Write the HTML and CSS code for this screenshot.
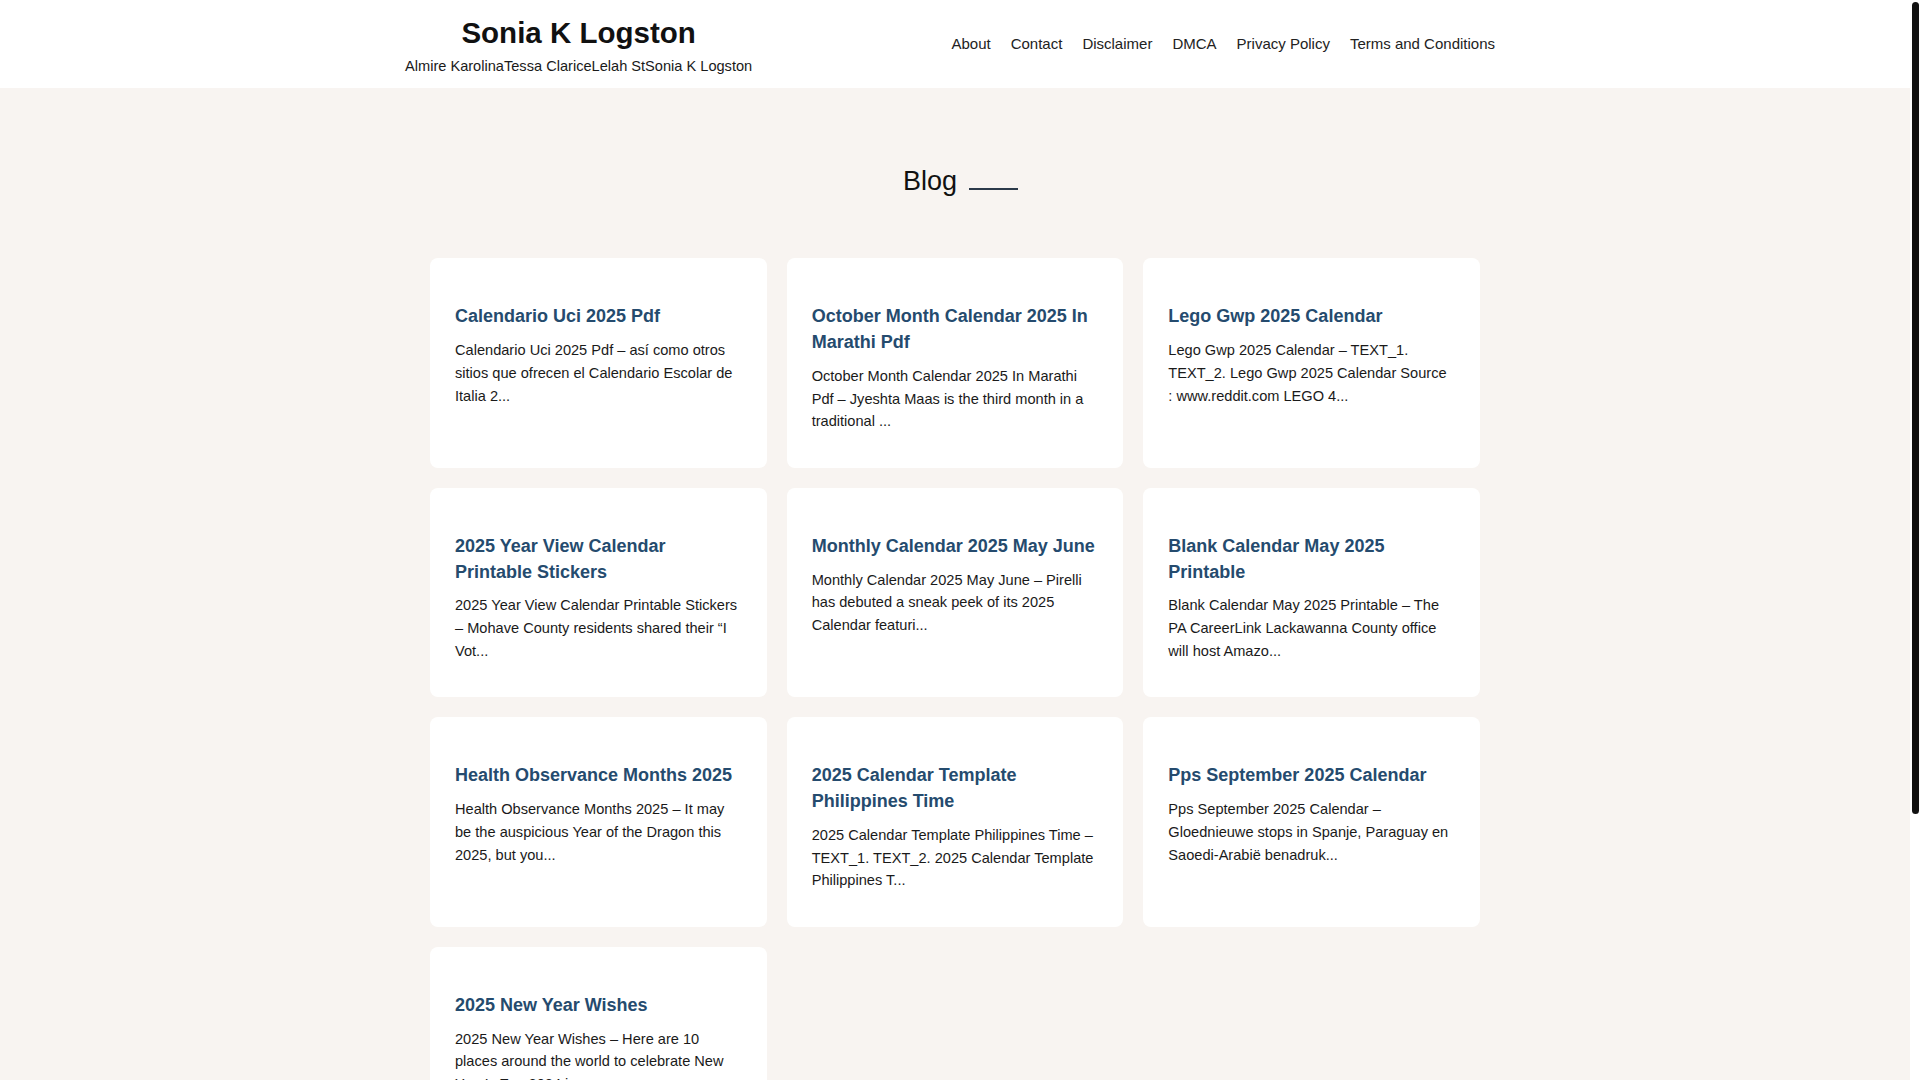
FILE: index.html
```html
<!DOCTYPE html>
<html lang="en">
<head>
<meta charset="utf-8">
<title>Blog - Sonia K Logston</title>
<link rel="stylesheet" href="styles.css">
</head>
<body>
<header class="site-header">
  <div class="header-inner">
    <div class="branding">
      <div class="site-title">Sonia K Logston</div>
      <div class="site-desc">Almire KarolinaTessa ClariceLelah StSonia K Logston</div>
    </div>
    <nav class="main-nav">
      <a href="#">About</a>
      <a href="#">Contact</a>
      <a href="#">Disclaimer</a>
      <a href="#">DMCA</a>
      <a href="#">Privacy Policy</a>
      <a href="#">Terms and Conditions</a>
    </nav>
  </div>
</header>

<main class="content">
  <div class="page-heading"><h1 class="page-title">Blog</h1></div>

  <div class="post-grid">
    <article class="card">
      <h2 class="card-title">Calendario Uci 2025 Pdf</h2>
      <p class="card-text">Calendario Uci 2025 Pdf – así como otros sitios que ofrecen el Calendario Escolar de Italia 2...</p>
    </article>
    <article class="card">
      <h2 class="card-title">October Month Calendar 2025 In Marathi Pdf</h2>
      <p class="card-text">October Month Calendar 2025 In Marathi Pdf – Jyeshta Maas is the third month in a traditional ...</p>
    </article>
    <article class="card">
      <h2 class="card-title">Lego Gwp 2025 Calendar</h2>
      <p class="card-text">Lego Gwp 2025 Calendar – TEXT_1. TEXT_2. Lego Gwp 2025 Calendar Source : www.reddit.com LEGO 4...</p>
    </article>
    <article class="card">
      <h2 class="card-title">2025 Year View Calendar Printable Stickers</h2>
      <p class="card-text">2025 Year View Calendar Printable Stickers – Mohave County residents shared their “I Vot...</p>
    </article>
    <article class="card">
      <h2 class="card-title">Monthly Calendar 2025 May June</h2>
      <p class="card-text">Monthly Calendar 2025 May June – Pirelli has debuted a sneak peek of its 2025 Calendar featuri...</p>
    </article>
    <article class="card">
      <h2 class="card-title">Blank Calendar May 2025 Printable</h2>
      <p class="card-text">Blank Calendar May 2025 Printable – The PA CareerLink Lackawanna County office will host Amazo...</p>
    </article>
    <article class="card">
      <h2 class="card-title">Health Observance Months 2025</h2>
      <p class="card-text">Health Observance Months 2025 – It may be the auspicious Year of the Dragon this 2025, but you...</p>
    </article>
    <article class="card">
      <h2 class="card-title">2025 Calendar Template Philippines Time</h2>
      <p class="card-text">2025 Calendar Template Philippines Time – TEXT_1. TEXT_2. 2025 Calendar Template Philippines T...</p>
    </article>
    <article class="card">
      <h2 class="card-title">Pps September 2025 Calendar</h2>
      <p class="card-text">Pps September 2025 Calendar – Gloednieuwe stops in Spanje, Paraguay en Saoedi-Arabië benadruk...</p>
    </article>
    <article class="card">
      <h2 class="card-title">2025 New Year Wishes</h2>
      <p class="card-text">2025 New Year Wishes – Here are 10 places around the world to celebrate New Year’s Eve 2024 in...</p>
    </article>
  </div>

  <nav class="pagination">
    <span class="page current">1</span>
    <a class="page" href="#">2</a>
    <a class="page" href="#">3</a>
    <a class="page" href="#">Next</a>
  </nav>
</main>

<footer class="site-footer">
  <p>Copyright © 2025 Sonia K Logston</p>
</footer>

<div class="scrollbar" aria-hidden="true"><div class="scrollbar-thumb"></div></div>
</body>
</html>
```

FILE: styles.css
```css
html {
  background: #ffffff;
}

body {
  margin: 0;
  padding-right: 10px;
  background: #f8f4f1;
  font-family: "Liberation Sans", Arial, sans-serif;
  color: #1c1c1c;
}

a {
  color: inherit;
  text-decoration: none;
}

.scrollbar {
  position: fixed;
  top: 0;
  right: 0;
  width: 10px;
  height: 100vh;
  background: #ffffff;
}

.scrollbar-thumb {
  margin: 2px 1px 0 2px;
  height: 812px;
  background: #111111;
  border-radius: 4px;
}

.site-header {
  background: #ffffff;
  height: 88px;
}

.header-inner {
  max-width: 1100px;
  margin: 0 auto;
  height: 100%;
  display: flex;
  justify-content: space-between;
  align-items: flex-start;
}

.branding {
  padding-top: 15px;
  text-align: center;
}

.site-title {
  font-size: 29.5px;
  line-height: 35.4px;
  font-weight: 700;
  color: #111111;
}

.site-desc {
  margin-top: 5.5px;
  font-size: 14.6px;
  line-height: 21.75px;
  color: #1a1a1a;
}

.main-nav {
  align-self: center;
  display: flex;
  font-size: 15px;
  line-height: 20px;
  color: #222222;
}

.main-nav a {
  padding: 0 10px;
}

.content {
  padding: 77.4px 0 60px;
}

.page-heading {
  display: flex;
  justify-content: center;
}

.page-title {
  margin: 0 0 0 11px;
  display: inline-flex;
  align-items: baseline;
  font-size: 27px;
  line-height: 32.4px;
  font-weight: 400;
  color: #111111;
}

.page-title::after {
  content: "";
  width: 49px;
  height: 2px;
  margin-left: 12px;
  background: #2c3a4a;
}

.post-grid {
  width: 1050px;
  margin: 60.6px auto 0;
  display: grid;
  grid-template-columns: repeat(3, 1fr);
  gap: 20px;
}

.card {
  background: #ffffff;
  border-radius: 8px;
  padding: 46px 27px 35px 25px;
}

.card-title {
  margin: 0 0 9px;
  font-size: 18px;
  line-height: 25.7px;
  font-weight: 700;
  color: #254b6e;
}

.card-text {
  margin: 0;
  font-size: 14.6px;
  line-height: 22.7px;
  color: #1a1a1a;
}

.pagination {
  margin-top: 50px;
  display: flex;
  justify-content: center;
  gap: 8px;
  font-size: 15px;
}

.pagination .page {
  min-width: 40px;
  height: 40px;
  padding: 0 8px;
  box-sizing: border-box;
  display: flex;
  align-items: center;
  justify-content: center;
  background: #ffffff;
  border-radius: 6px;
  color: #254b6e;
}

.pagination .current {
  background: #254b6e;
  color: #ffffff;
}

.site-footer {
  background: #ffffff;
  padding: 55px 0;
  text-align: center;
  font-size: 14.5px;
  color: #444444;
}

.site-footer p {
  margin: 0;
}
```
